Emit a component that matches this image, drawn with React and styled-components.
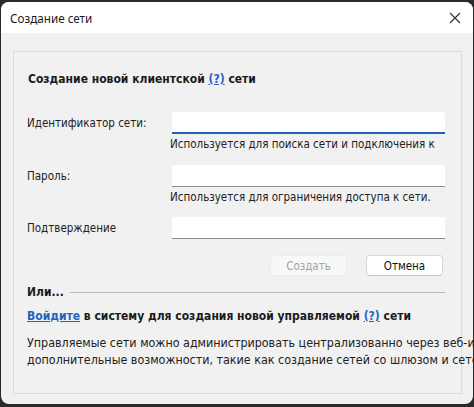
import React from "react";
import styled, { createGlobalStyle } from "styled-components";

const Global = createGlobalStyle`
  html, body {
    margin: 0;
    padding: 0;
    background: #2a2a2a;
  }
  * { box-sizing: border-box; }
`;

const Window = styled.div`
  margin: 2px 1px 0 1px;
  width: 472px;
  height: 402px;
  background: #f0f0f0;
  border-radius: 8px;
  overflow: hidden;
  display: flex;
  flex-direction: column;
  font-family: "DejaVu Sans Condensed", "DejaVu Sans", sans-serif;
  color: #1b1b1b;
`;

const TitleBar = styled.div`
  height: 31px;
  flex-shrink: 0;
  background: #ffffff;
  display: flex;
  align-items: center;
  justify-content: space-between;
  padding: 0 10px 0 9px;
`;

const Title = styled.span`
  font-family: "Noto Sans", "Open Sans", sans-serif;
  font-size: 11.7px;
  color: #1a1a1a;
`;

const Close = styled.span`
  width: 16px;
  height: 16px;
  display: flex;
  align-items: center;
  justify-content: center;
`;

const Body = styled.div`
  flex: 1;
  min-height: 0;
  padding: 18px 11px 10px 12px;
  display: flex;
`;

const Panel = styled.div`
  flex: 1;
  min-width: 0;
  border: 1px solid #dcdcdc;
  background: #f1f1f1;
  padding: 19px 16px 0 14px;
  display: flex;
  flex-direction: column;

  & > * {
    flex-shrink: 0;
  }
`;

const Heading = styled.div`
  font-weight: bold;
  font-size: 12px;
  line-height: 16px;
  white-space: nowrap;
`;

const Link = styled.a`
  color: #1f62c0;
  text-decoration: underline;
  cursor: pointer;
`;

const Form = styled.div`
  margin-top: 25px;
  display: grid;
  grid-template-columns: 145px minmax(0, 1fr);
  margin-left: -1px;
`;

const Label = styled.label`
  font-size: 11.5px;
  height: 22px;
  display: flex;
  align-items: center;
  color: #222;
`;

const Field = styled.div`
  display: flex;
  flex-direction: column;
  margin-bottom: ${({ $gap }) => $gap}px;
  min-width: 0;
`;

const Input = styled.div`
  height: 22px;
  background: #ffffff;
  border-radius: 3px 3px 0 0;
  border-bottom: ${({ $focus }) => ($focus ? "2px solid #1d62b6" : "1px solid #8a8a8a")};
`;

const Hint = styled.div`
  font-size: 11.5px;
  line-height: 16px;
  height: 16px;
  margin-top: 2px;
  margin-left: -2px;
  overflow: hidden;
  color: #222;
`;

const Actions = styled.div`
  display: flex;
  justify-content: flex-end;
  gap: 19px;
  margin-top: 16px;
  padding-right: 2px;
`;

const Button = styled.button`
  width: 77px;
  height: 21px;
  border-radius: 4px;
  font-family: inherit;
  font-size: 11.5px;
  padding: 0;
  background: ${({ disabled }) => (disabled ? "#f8f8f8" : "#ffffff")};
  color: ${({ disabled }) => (disabled ? "#a3a3a3" : "#111")};
  border: 1px solid ${({ disabled }) => (disabled ? "#ececec" : "#d6d6d6")};
  border-bottom-color: ${({ disabled }) => (disabled ? "#ececec" : "#c2c2c2")};
`;

const OrRow = styled.div`
  margin-top: 8px;
  display: flex;
  align-items: center;
  gap: 6px;
  margin-left: -1px;
`;

const OrText = styled.span`
  font-weight: bold;
  font-size: 12px;
  line-height: 16px;
`;

const Rule = styled.div`
  flex: 1;
  height: 1px;
  background: #bdbdbd;
`;

const SignIn = styled(Heading)`
  margin-top: 8px;
  margin-left: -1px;
`;

const Paragraph = styled.p`
  margin: 10px -40px 0 -1px;
  font-size: 12.4px;
  line-height: 17px;
  white-space: nowrap;
  color: #222;
`;

export default function App() {
  return (
    <>
      <Global />
      <Window>
        <TitleBar>
          <Title>Создание сети</Title>
          <Close>
            <svg width="12" height="12" viewBox="0 0 12 12">
              <path d="M1 1L11 11M11 1L1 11" stroke="#333" strokeWidth="1.2" />
            </svg>
          </Close>
        </TitleBar>
        <Body>
          <Panel>
            <Heading>
              Создание новой клиентской <Link>(?)</Link> сети
            </Heading>
            <Form>
              <Label>Идентификатор сети:</Label>
              <Field $gap={13}>
                <Input $focus />
                <Hint>Используется для поиска сети и подключения к ней.</Hint>
              </Field>
              <Label>Пароль:</Label>
              <Field $gap={12}>
                <Input />
                <Hint>Используется для ограничения доступа к сети.</Hint>
              </Field>
              <Label>Подтверждение</Label>
              <Field $gap={0}>
                <Input />
              </Field>
            </Form>
            <Actions>
              <Button disabled>Создать</Button>
              <Button>Отмена</Button>
            </Actions>
            <OrRow>
              <OrText>Или...</OrText>
              <Rule />
            </OrRow>
            <SignIn>
              <Link>Войдите</Link> в систему для создания новой управляемой <Link>(?)</Link> сети
            </SignIn>
            <Paragraph>
              Управляемые сети можно администрировать централизованно через веб-интерфейс и
              <br />
              дополнительные возможности, такие как создание сетей со шлюзом и сетей
            </Paragraph>
          </Panel>
        </Body>
      </Window>
    </>
  );
}
